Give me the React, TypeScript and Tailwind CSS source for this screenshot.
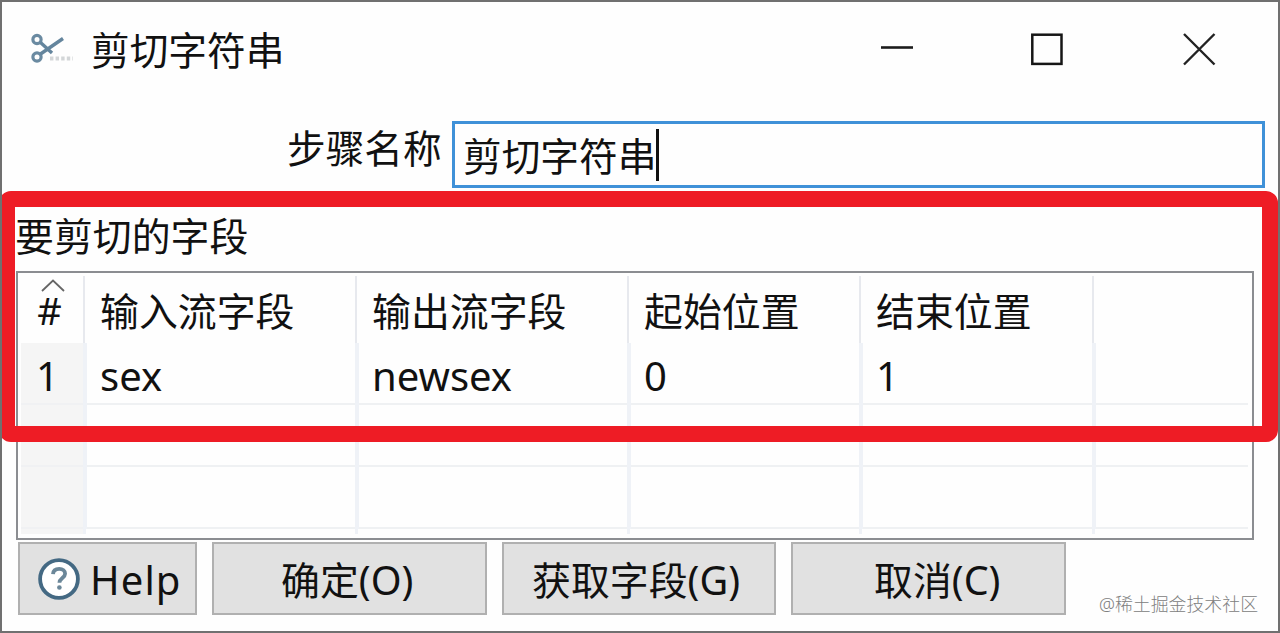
import React from "react";

const COLUMNS = ["输入流字段", "输出流字段", "起始位置", "结束位置", ""];
const ROWS: string[][] = [
  ["1", "sex", "newsex", "0", "1", ""],
  ["", "", "", "", "", ""],
  ["", "", "", "", "", ""],
];
const GRID = "grid grid-cols-[65px_272px_272px_232px_233px_156px]";

function ScissorsIcon() {
  return (
    <svg className="block h-[32px] w-[44px] shrink-0" viewBox="0 0 44 32" fill="none">
      <g stroke="#6a8aa1" strokeWidth="3.2">
        <circle cx="7" cy="7.500" r="4.100" />
        <circle cx="7" cy="25" r="4.100" />
      </g>
      <path d="M10.500 10.500 22 21M10.500 22 33 6.500" stroke="#64859d" strokeWidth="3.400" />
      <path d="M20 26.500h23" stroke="#d3d6d8" strokeWidth="4" strokeDasharray="3.400 2.200" />
    </svg>
  );
}

function TitleBar() {
  return (
    <header className="flex h-[96px] shrink-0 items-start pl-[28px]">
      <div className="mt-[30px]">
        <ScissorsIcon />
      </div>
      <h1 className="mt-[24px] ml-[17px] text-[38.7px] leading-[48px]">剪切字符串</h1>
      <div className="mt-[30px] mr-[62px] ml-auto flex items-center">
        <svg className="block h-[34px] w-[34px]" viewBox="0 0 34 34" fill="none">
          <path d="M1 15.500h32" stroke="#1c1c1c" strokeWidth="2.600" />
        </svg>
        <svg className="ml-[116px] block h-[34px] w-[34px]" viewBox="0 0 34 34" fill="none">
          <rect x="2.300" y="2.700" width="29.200" height="29.200" stroke="#161616" strokeWidth="2.500" />
        </svg>
        <svg className="ml-[118px] block h-[34px] w-[34px]" viewBox="0 0 34 34" fill="none">
          <path d="M2 2 32.500 32.500M32.500 2 2 32.500" stroke="#222" strokeWidth="2.400" />
        </svg>
      </div>
    </header>
  );
}

function StepNameRow() {
  return (
    <div className="flex h-[91px] shrink-0 items-start pt-[23px] pl-[285px]">
      <label className="mt-[3px] w-[165px] text-[38.7px] leading-[48px]">步骤名称</label>
      <div className="flex h-[67px] w-[813px] items-center border-[3px] border-[#3f91d8] pl-[8px]">
        <span className="mt-[2px] text-[38.7px] leading-[48px]">剪切字符串</span>
        <span className="h-[52px] w-[2.5px] bg-[#111]" />
      </div>
    </div>
  );
}

function FieldTable() {
  return (
    <div className="ml-[14px] flex h-[269px] w-[1238px] shrink-0 flex-col border-2 border-[#8b8d91] pt-[3px]">
      <div className={`${GRID} h-[67px] shrink-0`}>
        <div className="flex flex-col items-center pt-[3px] pl-[5px]">
          <svg className="block h-[13px] w-[24px] shrink-0" viewBox="0 0 24 13" fill="none">
            <path d="M1 12 12 1.500l11 10.500" stroke="#666" strokeWidth="1.800" />
          </svg>
          <span className="-ml-[7px] text-[38px] leading-[36px]">#</span>
        </div>
        {COLUMNS.map((c, i) => (
          <div key={i} className="border-l-[2px] border-[#e7e9ee] pt-[11px] pl-[15px] text-[38.9px] leading-[48px] whitespace-nowrap">
            {c}
          </div>
        ))}
      </div>
      {ROWS.map((row, r) => (
        <div key={r} className={`${GRID} h-[62px] shrink-0`}>
          {row.map((v, i) =>
            i === 0 ? (
              <div key={i} className="ml-[3px] border-b-2 border-[#f0f1f3] bg-[#f5f5f5] pt-[9px] pl-[15px] text-[40px] leading-[48px]">
                {v}
              </div>
            ) : (
              <div key={i} className="flex">
                <div className="w-[4px] shrink-0 bg-[#eff2f7]" />
                <div className="flex-1 border-b-2 border-[#eff1f3] pt-[9px] pl-[13px] text-[40px] leading-[48px]">
                  {v}
                </div>
              </div>
            ),
          )}
        </div>
      ))}
      <div className={`${GRID} h-[5px] shrink-0`}>
        <div className="ml-[3px] bg-[#f5f5f5]" />
        {COLUMNS.map((_, i) => (
          <div key={i} className="w-[3px] bg-[#eff2f7]" />
        ))}
      </div>
    </div>
  );
}

function HelpIcon() {
  return (
    <svg className="block h-[42px] w-[42px] shrink-0" viewBox="0 0 42 42" fill="none">
      <circle cx="21" cy="21" r="18.9" fill="#fff" stroke="#446983" strokeWidth="3.8" />
      <path
        d="M15 16.200c.2-3.500 2.800-5.300 6.200-5.300 3.500 0 5.900 2 5.900 4.900 0 4.100-5.700 4.500-5.700 9"
        stroke="#6b8799"
        strokeWidth="3.800"
      />
      <circle cx="21.400" cy="29.500" r="2.300" fill="#6b8799" />
    </svg>
  );
}

function DialogButton({ label, accel, className }: { label: string; accel: string; className: string }) {
  return (
    <button
      className={`flex h-[73px] items-center border-2 border-[#b0b0b0] bg-[#e1e1e1] pt-[2px] text-[38.9px] leading-[48px] whitespace-nowrap ${className}`}
    >
      {label}
      <span className="text-[39.5px]">({accel})</span>
    </button>
  );
}

export default function App() {
  return (
    <main className="relative flex h-[633px] w-[1280px] flex-col overflow-hidden border-2 border-[#707070] bg-[#fefefe] font-['Noto_Sans','Noto_Sans_CJK_SC',sans-serif] text-[#111]">
      <TitleBar />
      <StepNameRow />
      <div className="h-[82px] shrink-0 pt-[23px] pl-[13px] text-[38.9px] leading-[48px]">要剪切的字段</div>
      <FieldTable />
      <footer className="flex shrink-0 items-start pt-[2px] pl-[16px]">
        <button className="flex h-[73px] w-[179px] items-center border-2 border-[#b0b0b0] bg-[#e1e1e1] pl-[18px]">
          <HelpIcon />
          <span className="mt-[2px] ml-[10px] text-[40px] leading-[48px] tracking-[1.1px]">Help</span>
        </button>
        <DialogButton className="ml-[15px] w-[275px] pl-[67px]" label="确定" accel="O" />
        <DialogButton className="ml-[15px] w-[274px] pl-[28px]" label="获取字段" accel="G" />
        <DialogButton className="ml-[15px] w-[275px] pl-[81px]" label="取消" accel="C" />
        <span className="mt-[49px] ml-[33px] text-[17.9px] leading-[26px] font-light whitespace-nowrap text-[#808080]">
          @稀土掘金技术社区
        </span>
      </footer>
      <div className="pointer-events-none absolute top-[189px] -left-[3px] h-[251px] w-[1279px] rounded-[12px] border-[16px] border-[#ee1c25]" />
    </main>
  );
}
